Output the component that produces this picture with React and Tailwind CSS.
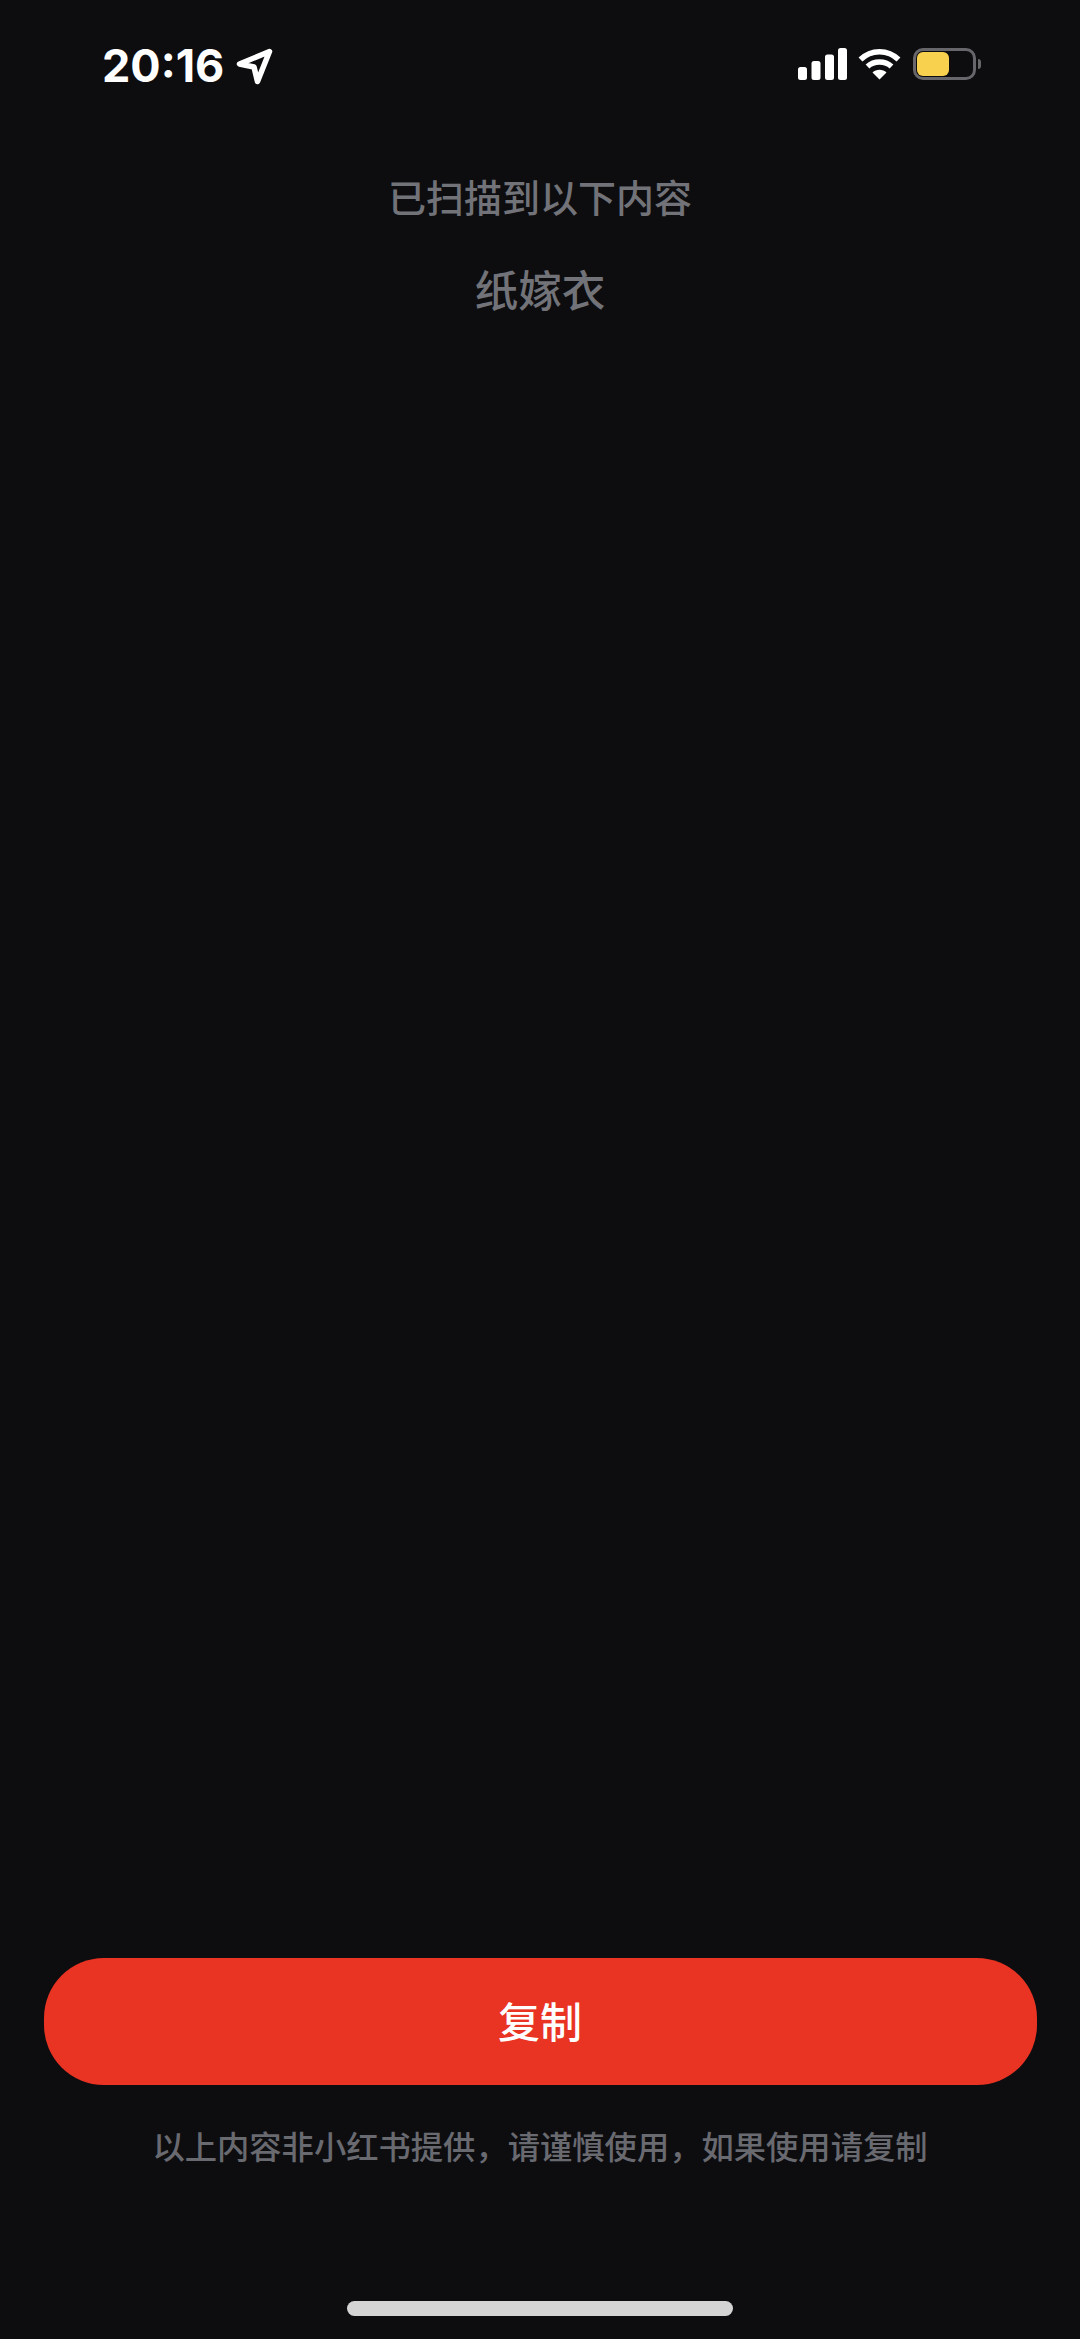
export default function App() {
  return (
    <div className="w-[1080px] h-[2339px] bg-[#0d0d10] flex flex-col items-center overflow-hidden font-['Noto_Sans_CJK_SC','Noto_Sans',sans-serif]">
      {/* status bar */}
      <div className="w-full h-[90px] pt-[39px] pl-[102px] pr-[99px] flex items-start justify-between shrink-0">
        <div className="flex items-center gap-[13px]">
          <span className="font-['Inter',sans-serif] font-bold text-[45px] leading-[54px] text-white">20:16</span>
          <svg width="37" height="37" viewBox="0 0 37 37" fill="none" className="mt-[1px] -ml-[1px]">
            <path d="M33.5 3.5 L3.5 16 L18 19 L21.5 33.5 Z" stroke="white" strokeWidth="5.5" strokeLinejoin="round" />
          </svg>
        </div>
        <div className="flex items-start gap-[10px] pt-[9px]">
          <svg width="50" height="32" viewBox="0 0 50 32" fill="white">
            <rect x="0" y="19" width="9" height="13" rx="2.5" />
            <rect x="13.5" y="13" width="9" height="19" rx="2.5" />
            <rect x="27" y="6.5" width="9" height="25.5" rx="2.5" />
            <rect x="40" y="0" width="9" height="32" rx="2.5" />
          </svg>
          <svg width="43" height="32" viewBox="0 0 43 32" fill="none" stroke="white" strokeWidth="5.5">
            <path d="M2.5 11.5 C13 1 30 1 40.5 11.5" />
            <path d="M9.5 18.5 C16 12.5 27 12.5 33.5 18.5" />
            <path d="M21.5 31.5 L14.5 24.5 C18 20.8 25 20.8 28.5 24.5 Z" fill="white" stroke="none" />
          </svg>
          <div className="flex items-center gap-[2px] ml-[2px]">
            <div className="w-[63px] h-[32px] rounded-[10px] border-[3px] border-[#66666b] p-[1px] flex">
              <div className="w-[32px] h-full rounded-[6px] bg-[#f8d24f]"></div>
            </div>
            <div className="w-[3px] h-[10px] bg-[#66666b] rounded-r-[3px]"></div>
          </div>
        </div>
      </div>

      <div className="mt-[82px] text-[38px] leading-[48px] text-[#727379] font-medium">已扫描到以下内容</div>
      <div className="mt-[42px] text-[43.5px] leading-[54px] text-[#727379] font-medium">纸嫁衣</div>

      <div className="flex-1"></div>

      <button className="w-[993px] h-[127px] pb-[5px] rounded-[60px] bg-[#e93323] text-white text-[42px] font-medium flex items-center justify-center">复制</button>
      <div className="mt-[37px] text-[32.3px] leading-[46px] text-[#696a70] font-medium">{"以上内容非小红书提供\uFF0C请谨慎使用\uFF0C如果使用请复制"}</div>
      <div className="mt-[133px] mb-[23px] w-[386px] h-[15px] rounded-[8px] bg-[#d4d4d4]"></div>
    </div>
  );
}
